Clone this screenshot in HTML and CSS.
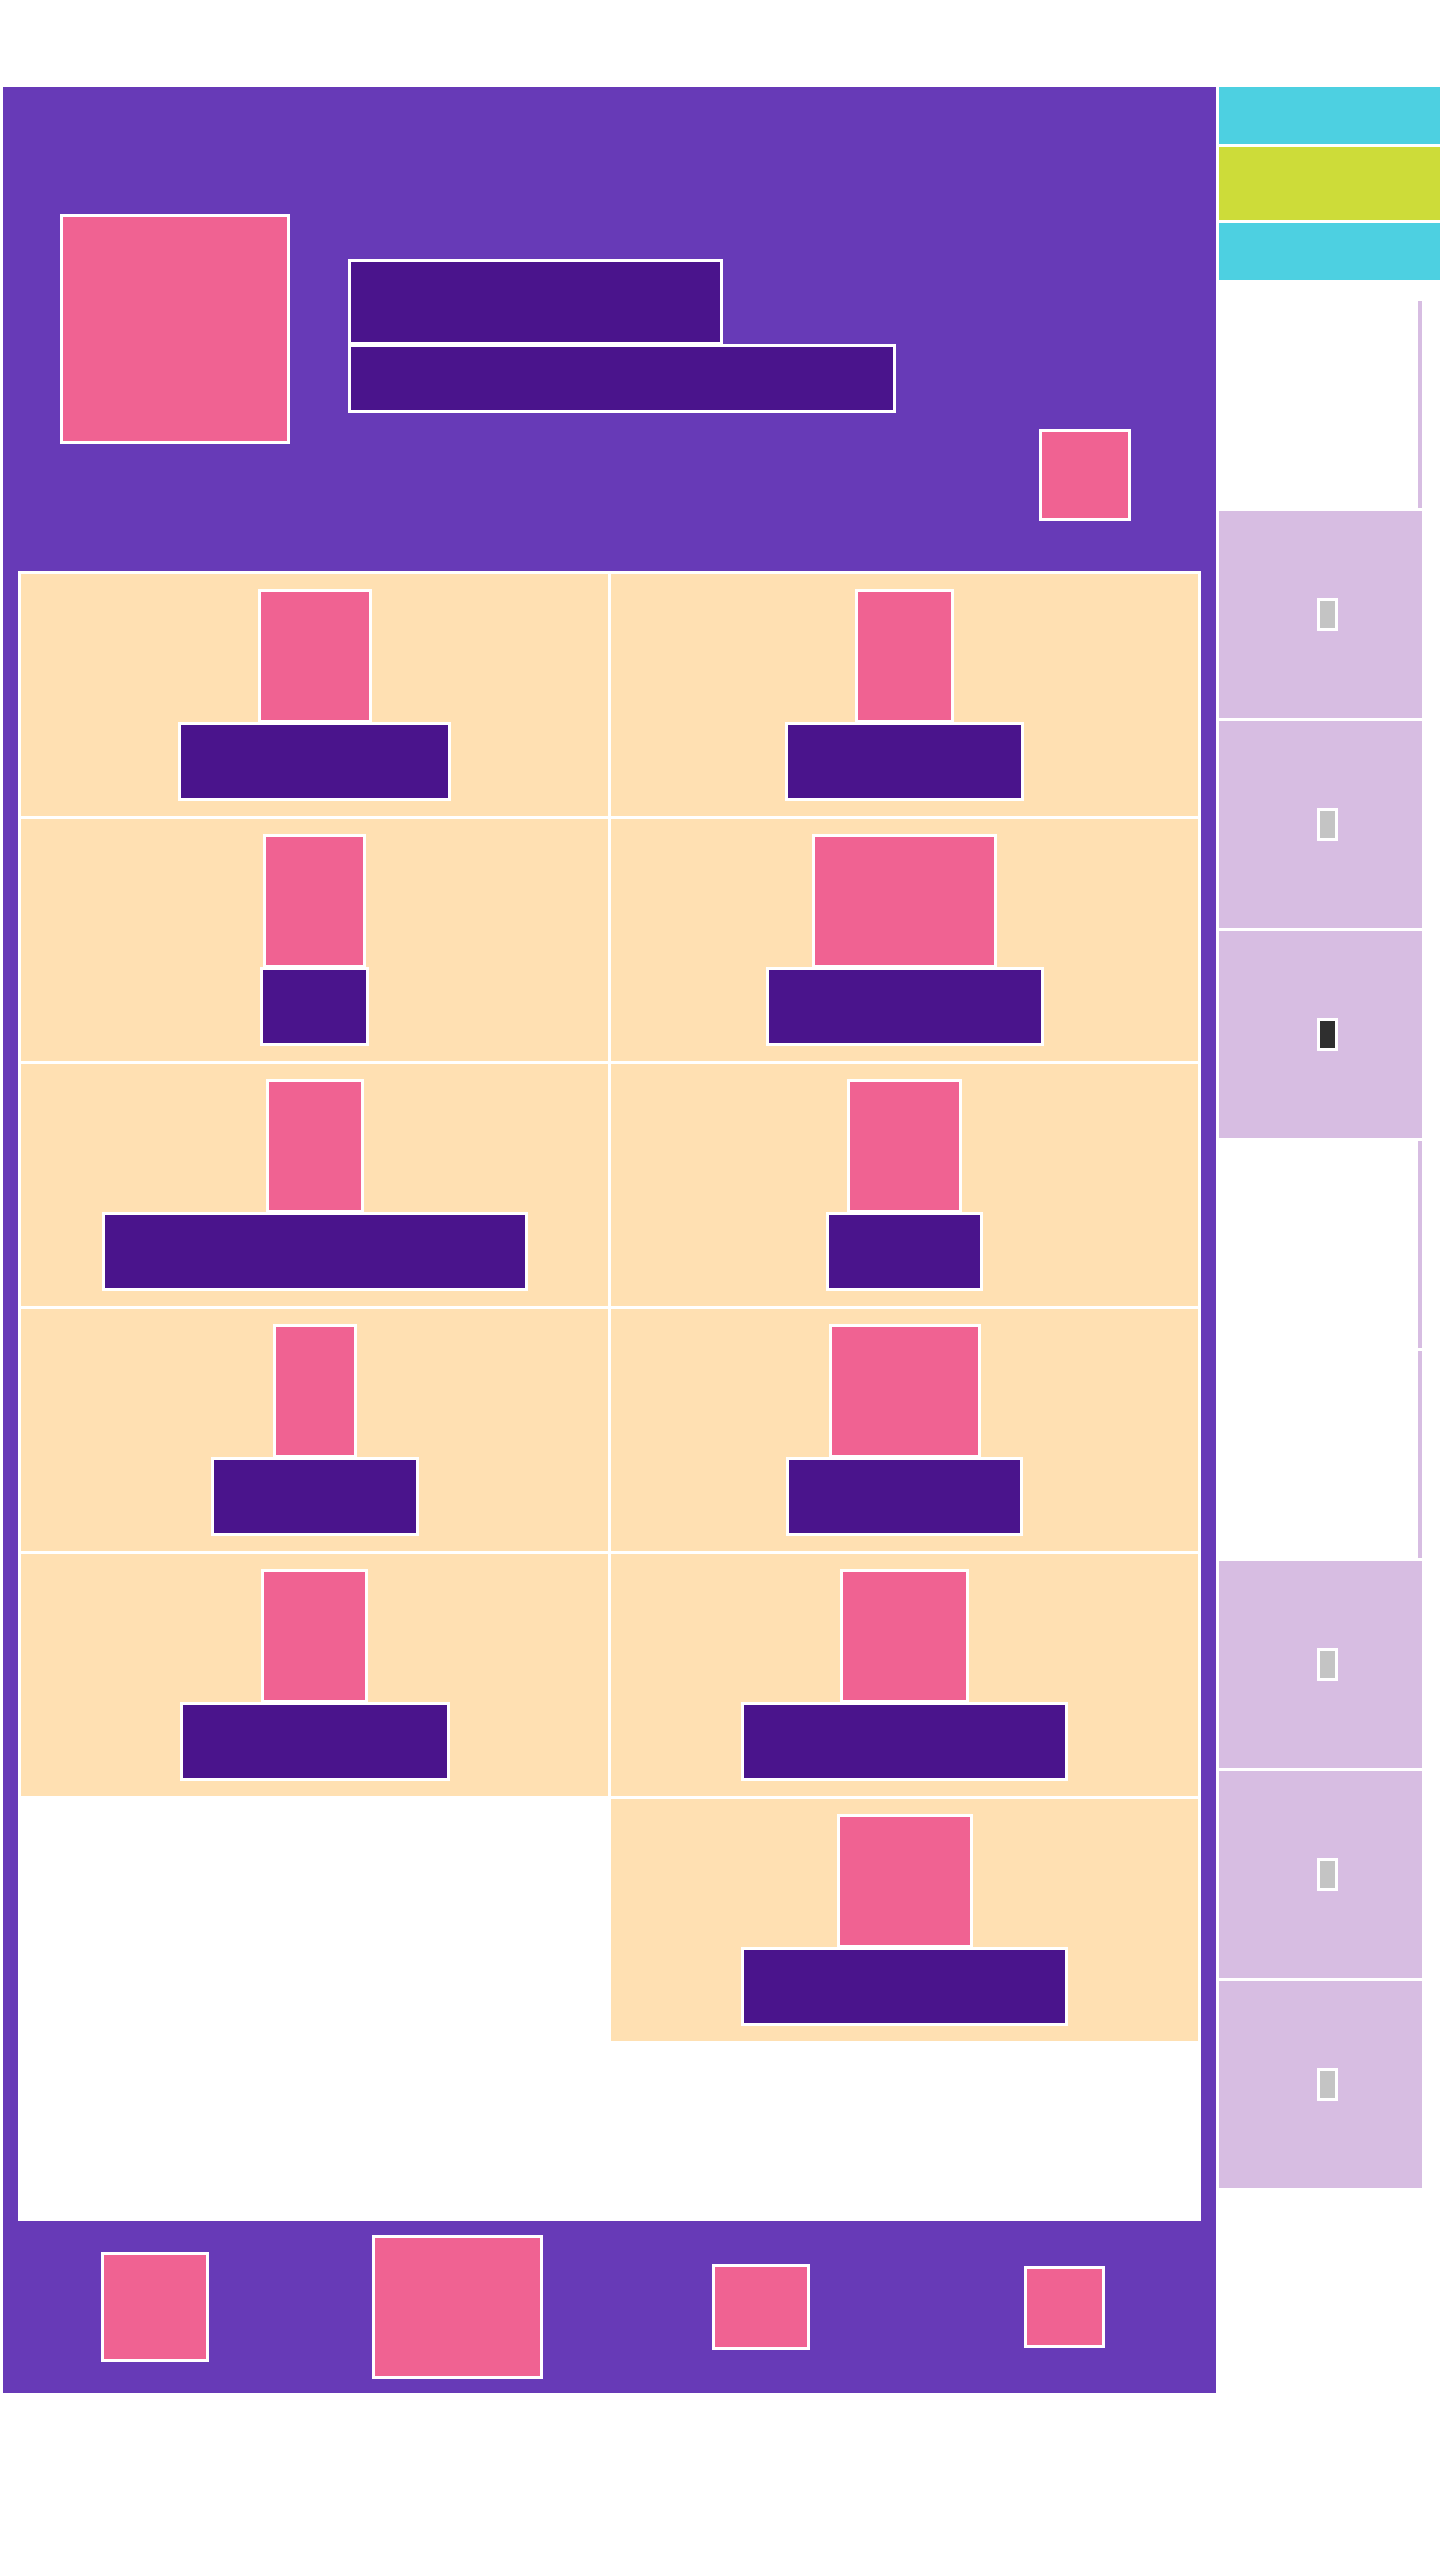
FILE: index.html
```html
<!DOCTYPE html>
<html lang="en">
<head>
    <meta charset="UTF-8">
    <meta name="viewport" content="width=device-width, initial-scale=1.0">
    <title>Catalogue</title>
    <link rel="stylesheet" href="styles.css">
</head>
<body>

    <div class="page">
        <div class="panel">
            <header class="top">
                <div class="avatar"></div>
                <div class="titles">
                    <div class="bar bar-title"></div>
                    <div class="bar bar-sub"></div>
                </div>
                <div class="badge"></div>
            </header>

            <main class="content">
                <div class="column">
                    <div class="card"><div class="card-img" style="width: 114px"></div><div class="card-base" style="width: 273px"></div></div>
                    <div class="card"><div class="card-img" style="width: 103px"></div><div class="card-base" style="width: 109px"></div></div>
                    <div class="card"><div class="card-img" style="width: 98px"></div><div class="card-base" style="width: 426px"></div></div>
                    <div class="card"><div class="card-img" style="width: 84px"></div><div class="card-base" style="width: 208px"></div></div>
                    <div class="card"><div class="card-img" style="width: 107px"></div><div class="card-base" style="width: 270px"></div></div>
                </div>
                <div class="column">
                    <div class="card"><div class="card-img" style="width: 99px"></div><div class="card-base" style="width: 239px"></div></div>
                    <div class="card"><div class="card-img" style="width: 185px"></div><div class="card-base" style="width: 278px"></div></div>
                    <div class="card"><div class="card-img" style="width: 115px"></div><div class="card-base" style="width: 157px"></div></div>
                    <div class="card"><div class="card-img" style="width: 152px"></div><div class="card-base" style="width: 237px"></div></div>
                    <div class="card"><div class="card-img" style="width: 129px"></div><div class="card-base" style="width: 327px"></div></div>
                    <div class="card"><div class="card-img" style="width: 136px"></div><div class="card-base" style="width: 327px"></div></div>
                </div>
            </main>

            <footer class="bottom">
                <div class="tab"><div class="tab-icon tab-1"></div></div>
                <div class="tab"><div class="tab-icon tab-2"></div></div>
                <div class="tab"><div class="tab-icon tab-3"></div></div>
                <div class="tab"><div class="tab-icon tab-4"></div></div>
            </footer>
        </div>

        <aside class="side">
            <div class="chip chip-cyan"></div>
            <div class="chip chip-lime"></div>
            <div class="chip chip-cyan"></div>

            <ul class="side-list">
                <li class="side-item empty"></li>
                <li class="side-item"><span class="dot"></span></li>
                <li class="side-item"><span class="dot"></span></li>
                <li class="side-item"><span class="dot active"></span></li>
                <li class="side-item empty"></li>
                <li class="side-item empty"></li>
                <li class="side-item"><span class="dot"></span></li>
                <li class="side-item"><span class="dot"></span></li>
                <li class="side-item"><span class="dot"></span></li>
            </ul>
        </aside>
    </div>

</body>
</html>
```

FILE: styles.css
```css
* {
    box-sizing: border-box;
}

body {
    margin: 0;
    background-color: #fff;
    font-family: "Liberation Sans", Arial, sans-serif;
}

.page {
    display: flex;
    align-items: flex-start;
    gap: 3px;
    padding: 87px 0 0 3px;
}

.panel {
    width: 1213px;
    background-color: #673ab7;
    padding: 0 15px;
}

/* header */

.top {
    height: 484px;
    display: flex;
    align-items: center;
    margin: 0 -15px;
    padding: 0 85px 0 57px;
}

.avatar {
    width: 230px;
    height: 230px;
    background-color: #f06292;
    border: 3px solid #fff;
}

.titles {
    margin: 14px 0 0 58px;
}

.bar {
    background-color: #4a148c;
    border: 3px solid #fff;
}

.bar-title {
    width: 375px;
    height: 86px;
}

.bar-sub {
    width: 548px;
    height: 69px;
    margin-top: -1px;
}

.badge {
    width: 92px;
    height: 92px;
    margin-left: auto;
    align-self: flex-end;
    margin-bottom: 50px;
    background-color: #f06292;
    border: 3px solid #fff;
}

/* cards */

.content {
    height: 1650px;
    background-color: #fff;
    padding: 3px;
    display: flex;
    align-items: flex-start;
    gap: 3px;
}

.column {
    flex: 1;
    display: flex;
    flex-direction: column;
    gap: 3px;
}

.card {
    height: 242px;
    background-color: #ffe0b2;
    padding-top: 15px;
    display: flex;
    flex-direction: column;
    align-items: center;
}

.card-img {
    height: 134px;
    background-color: #f06292;
    border: 3px solid #fff;
}

.card-base {
    height: 79px;
    margin-top: -1px;
    background-color: #4a148c;
    border: 3px solid #fff;
}

/* footer */

.bottom {
    height: 172px;
    display: flex;
    align-items: center;
    margin: 0 -15px;
}

.tab {
    flex: 1;
    display: flex;
    justify-content: center;
}

.tab-icon {
    background-color: #f06292;
    border: 3px solid #fff;
}

.tab-1 {
    width: 108px;
    height: 110px;
}

.tab-2 {
    width: 171px;
    height: 144px;
}

.tab-3 {
    width: 98px;
    height: 86px;
}

.tab-4 {
    width: 81px;
    height: 82px;
}

/* side column */

.side {
    flex: 1;
    display: flex;
    flex-direction: column;
    gap: 3px;
}

.chip {
    height: 57px;
}

.chip-cyan {
    background-color: #4dd0e1;
}

.chip-lime {
    height: 73px;
    background-color: #cddc39;
}

.side-list {
    list-style: none;
    margin: 18px 0 0;
    padding: 0;
    width: 203px;
    display: flex;
    flex-direction: column;
    gap: 3px;
}

.side-item {
    height: 207px;
    background-color: #d7bde2;
    display: flex;
    align-items: center;
    justify-content: center;
    padding-left: 14px;
}

.side-item.empty {
    background-color: #fff;
    border-right: 4px solid #d7bde2;
}

.dot {
    width: 21px;
    height: 33px;
    background-color: #c4c4c4;
    border: 3px solid #fff;
}

.dot.active {
    background-color: #2f2f2f;
}
```
